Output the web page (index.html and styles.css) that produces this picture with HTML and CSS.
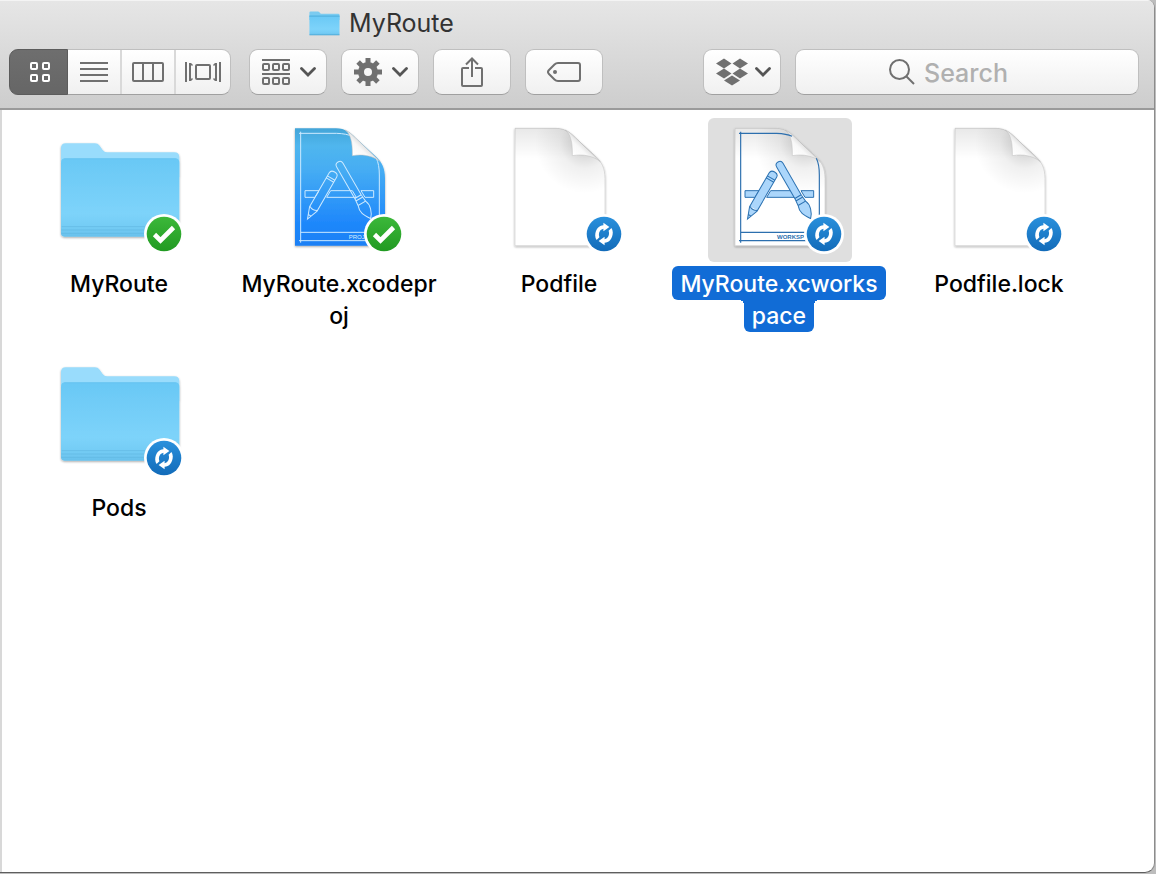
FILE: index.html
```html
<!DOCTYPE html>
<html lang="en">
<head>
<meta charset="utf-8">
<title>MyRoute</title>
<link rel="stylesheet" href="styles.css">
</head>
<body>
<svg class="defs" aria-hidden="true">
  <defs>
    <linearGradient id="g-front" x1="0" y1="0" x2="0" y2="1"><stop offset="0" stop-color="#69c8f5"/><stop offset=".7" stop-color="#7dd3fa"/><stop offset=".88" stop-color="#74ccf5"/><stop offset="1" stop-color="#69c1ec"/></linearGradient>
    <linearGradient id="g-blue" x1="0" y1="0" x2="0" y2="1"><stop offset="0" stop-color="#43a5d8"/><stop offset=".15" stop-color="#50b6ee"/><stop offset=".35" stop-color="#46adf3"/><stop offset=".8" stop-color="#1f88fb"/><stop offset="1" stop-color="#1c80f5"/></linearGradient>
    <radialGradient id="g-shade" gradientUnits="userSpaceOnUse" cx="405" cy="85" r="150"><stop offset="0" stop-color="#000" stop-opacity=".2"/><stop offset=".25" stop-color="#000" stop-opacity=".14"/><stop offset=".5" stop-color="#000" stop-opacity=".06"/><stop offset="1" stop-color="#000" stop-opacity="0"/></radialGradient>
    <linearGradient id="g-top" gradientUnits="userSpaceOnUse" x1="0" y1="40" x2="0" y2="130"><stop offset="0" stop-color="#000" stop-opacity=".09"/><stop offset="1" stop-color="#000" stop-opacity="0"/></linearGradient>
    <linearGradient id="g-flap" gradientUnits="userSpaceOnUse" x1="370" y1="122" x2="404" y2="86"><stop offset="0" stop-color="#fff"/><stop offset=".6" stop-color="#f8f8f8"/><stop offset="1" stop-color="#dadada"/></linearGradient>
    <linearGradient id="g-green" x1="0" y1="0" x2="0" y2="1"><stop offset="0" stop-color="#3cb83a"/><stop offset="1" stop-color="#219a22"/></linearGradient>
    <linearGradient id="g-sync" x1="0" y1="0" x2="0" y2="1"><stop offset="0" stop-color="#2990dc"/><stop offset="1" stop-color="#126bb9"/></linearGradient>
    <filter id="shadow" x="-10%" y="-10%" width="120%" height="120%"><feDropShadow dx="0" dy="3" stdDeviation="3" flood-color="#000" flood-opacity=".35"/></filter>
  </defs>

  <symbol id="folder" viewBox="24 -6 432 432">
    <g filter="url(#shadow)">
      <path d="M63 84q0-14 14-14h88q9 0 14 7l9 13q5 7 13 7h202q15 0 15 14v60H63z" fill="#99dcfc"/>
      <path d="M63 128q0-13 13-13h329q13 0 13 13v212q0 10-10 10H73q-10 0-10-10z" fill="url(#g-front)"/>
    </g>
    <path d="M65 320h351M64 330h353M64 340h353" stroke="#5fb6e0" stroke-width="3" opacity=".65"/>
    <path d="M72 116.500h337" stroke="#61bce8" stroke-width="2" opacity=".6"/>
  </symbol>

  <symbol id="document" viewBox="114 9 432 432">
    <g filter="url(#shadow)"><path d="M195 40H318C346 40 362 54 376 68L437 124C456 142 465 160 465 190V392H195Z" fill="#fff" stroke="#cfcfcf" stroke-width="2"/></g>
    <path d="M195 40H318C346 40 362 54 376 68L437 124C456 142 465 160 465 190V392H195Z" fill="url(#g-top)"/>
    <path d="M195 40H318C346 40 362 54 376 68L437 124C456 142 465 160 465 190V392H195Z" fill="url(#g-shade)"/>
    <path d="M345 45C361 56 368 80 367 122C400 116 432 124 451 140L376 68C365 57 356 50 345 45Z" fill="url(#g-flap)" stroke="#bdbdbd" stroke-width="1.500"/>
  </symbol>

  <symbol id="tools" viewBox="114 9 432 432">
    <path d="M225 227H267L255 247H225ZM302 227H367L379 247H290ZM393 227H431V247H405Z"/>
    <g transform="translate(314 171) rotate(30)">
      <path d="M-13 11Q-13 0 0 0T13 11V128L0 163L-13 128ZM-13 21H13M-13 28H13M-13 126Q0 134 13 126M-5 150H5"/>
    </g>
    <g transform="translate(324 141) rotate(-30)">
      <path d="M-11 11Q-11 0 0 0T11 11V120H-11ZM-11 120H11L13 143H-13ZM-12 128H12M-13 143C-21 164-13 176 0 196C13 182 21 160 13 143Z"/>
    </g>
  </symbol>

  <symbol id="frame" viewBox="114 9 432 432">
    <path d="M212 50V383M207 55H320Q350 56 366 64M439 130Q448 148 448 180V383M207 377H455M212 352H448"/>
  </symbol>

  <symbol id="project" viewBox="114 9 432 432">
    <g filter="url(#shadow)"><path d="M195 40H318C346 40 362 54 376 68L437 124C456 142 465 160 465 190V392H195Z" fill="url(#g-blue)"/></g>
    <g fill="none" stroke="#cdeaff" stroke-width="3">
      <use href="#frame" x="114" y="9" width="432" height="432"/>
      <use href="#tools" x="114" y="9" width="432" height="432"/>
    </g>
    <path d="M345 45C361 56 368 80 367 122C400 116 432 124 451 140L376 68C365 57 356 50 345 45Z" fill="url(#g-flap)" stroke="#bdbdbd" stroke-width="1.500"/>
  </symbol>

  <symbol id="workspace" viewBox="114 9 432 432">
    <use href="#document" x="114" y="9" width="432" height="432"/>
    <use href="#frame" x="114" y="9" width="432" height="432" fill="none" stroke="#2c6fae" stroke-width="3.500"/>
    <use href="#tools" x="114" y="9" width="432" height="432" fill="#abd6fb" stroke="#2c72b2" stroke-width="3"/>
  </symbol>

  <symbol id="badge-check" viewBox="0 0 40 40">
    <circle cx="20" cy="20" r="20" fill="#fff"/><circle cx="20" cy="20" r="17.300" fill="url(#g-green)"/>
    <path d="M10.500 20.500l6 6L29.500 13.500" fill="none" stroke="#fff" stroke-width="4.600"/>
  </symbol>
  <symbol id="badge-sync" viewBox="-20 -20 40 40">
    <circle r="20" fill="#fff"/><circle r="17.300" fill="url(#g-sync)"/>
    <g id="sync-arrow"><path d="M-8.800 1.500C-8.600-5-5-8.600-.6-8.800V-11.300L5.400-7L-.6-2.700V-5.200C-4-4.500-6-1-4.600 3.200L-7.400 6Q-8.800 4-8.800 1.500Z" fill="#fff"/></g>
    <use href="#sync-arrow" transform="rotate(180)"/>
  </symbol>
  <symbol id="chevron" viewBox="0 0 16 10"><path d="M1.500 1.500L8 8L14.500 1.500" fill="none" stroke="#555" stroke-width="2.800" stroke-linecap="round"/></symbol>
</svg>

<div class="window">
  <header class="chrome">
    <h1 class="title">
      <svg class="title-icon" viewBox="58 66 366 294" aria-hidden="true">
        <path d="M63 84q0-14 14-14h88q9 0 14 7l9 13q5 7 13 7h202q15 0 15 14v60H63z" fill="#7bcbf0"/>
        <path d="M63 128q0-13 13-13h329q13 0 13 13v212q0 10-10 10H73q-10 0-10-10z" fill="url(#g-front)"/>
        <path d="M63 126h355M63 347h355" stroke="#4da9d6" stroke-width="10"/>
      </svg>
      MyRoute
    </h1>
    <div class="toolbar" role="toolbar" aria-label="Finder toolbar">
      <div class="views">
        <button class="view view-active" type="button" aria-label="Icon view" aria-pressed="true">
          <svg width="22" height="22" viewBox="0 0 22 22" fill="none" stroke="#fff" stroke-width="2"><rect x="2" y="2" width="6" height="6" rx="1"/><rect x="14" y="2" width="6" height="6" rx="1"/><rect x="2" y="14" width="6" height="6" rx="1"/><rect x="14" y="14" width="6" height="6" rx="1"/></svg>
        </button>
        <button class="view" type="button" aria-label="List view">
          <svg width="28" height="20" viewBox="0 0 28 20" stroke="#707070" stroke-width="2"><path d="M0 1h28M0 7h28M0 13h28M0 19h28"/></svg>
        </button>
        <button class="view" type="button" aria-label="Column view">
          <svg width="32" height="20" viewBox="0 0 32 20" fill="none" stroke="#707070" stroke-width="2"><rect x="1" y="1" width="30" height="18" rx="1"/><path d="M11 1v18M21 1v18"/></svg>
        </button>
        <button class="view" type="button" aria-label="Cover Flow view">
          <svg width="36" height="20" viewBox="0 0 36 20" fill="none" stroke="#707070" stroke-width="2"><path d="M1 0v20M35 0v20M5 1v18M31 1v18"/><path d="M5.500 1.500l2 2M5.500 18.500l2-2M30.500 1.500l-2 2M30.500 18.500l-2-2" stroke-width="1.500"/><rect x="11" y="3" width="14" height="14" rx="1"/></svg>
        </button>
      </div>
      <button class="tool tool-menu" type="button" aria-label="Arrange">
        <svg width="28" height="26" viewBox="0 0 28 26" fill="none" stroke="#707070" stroke-width="2"><path d="M0 1h28M0 15h28"/><rect x="1" y="5" width="6" height="6" rx="1"/><rect x="11" y="5" width="6" height="6" rx="1"/><rect x="21" y="5" width="6" height="6" rx="1"/><rect x="1" y="19" width="6" height="6" rx="1"/><rect x="11" y="19" width="6" height="6" rx="1"/><rect x="21" y="19" width="6" height="6" rx="1"/></svg>
        <svg class="chevron"><use href="#chevron"/></svg>
      </button>
      <button class="tool tool-menu" type="button" aria-label="Action">
        <svg width="28" height="28" viewBox="-14 -14 28 28" fill="none" stroke="#707070"><circle r="7" stroke-width="6"/><path stroke-width="5" d="M0-14v6M0 8v6M-14 0h6M8 0h6M-9.900-9.900l4 4M5.900 5.900l4 4M-9.900 9.900l4-4M5.900-5.900l4-4"/></svg>
        <svg class="chevron"><use href="#chevron"/></svg>
      </button>
      <button class="tool" type="button" aria-label="Share">
        <svg width="22" height="30" viewBox="0 0 22 30" fill="none" stroke="#707070" stroke-width="2"><path d="M8 11H2q-1 0-1 1v16q0 1 1 1h18q1 0 1-1V12q0-1-1-1h-6M11 20V2M5 7.500L11 1.500L17 7.500"/></svg>
      </button>
      <button class="tool" type="button" aria-label="Edit tags">
        <svg width="34" height="20" viewBox="0 0 34 20" fill="none" stroke="#707070" stroke-width="2"><path d="M11 1H31q2 0 2 2V17q0 2-2 2H11Q9 19 7.500 17.500L2 12Q0 10 2 8L7.500 2.500Q9 1 11 1Z"/><circle cx="8" cy="10" r="2" fill="#707070" stroke="none"/></svg>
      </button>
      <button class="tool tool-menu tool-dropbox" type="button" aria-label="Dropbox">
        <svg width="32" height="28" viewBox="0 0 32 28" fill="#707070"><path d="M8 .5L15.500 5.500L8 10.500L0 5.500ZM24 .5L32 5.500L24 10.500L16.500 5.500ZM8 10.500L15.500 15.500L8 20.500L0 15.500ZM24 10.500L32 15.500L24 20.500L16.500 15.500ZM16 17.500L24 22.500L16 27.500L8 22.500Z"/></svg>
        <svg class="chevron"><use href="#chevron"/></svg>
      </button>
      <label class="search">
        <svg width="26" height="26" viewBox="0 0 26 26" fill="none" stroke="#707070" stroke-width="2" aria-hidden="true"><circle cx="10.500" cy="10.500" r="9.500"/><path d="M17 17l8 8"/></svg>
        <input class="search-input" type="search" placeholder="Search" aria-label="Search">
      </label>
    </div>
  </header>

  <main class="content">
    <ul class="files">
      <li><button class="file" type="button">
        <span class="icon"><svg class="art"><use href="#folder"/></svg><svg class="badge"><use href="#badge-check"/></svg></span>
        <span class="name"><span class="line">MyRoute</span></span>
      </button></li>
      <li><button class="file" type="button">
        <span class="icon"><svg class="art" viewBox="114 9 432 432"><use href="#project" x="114" y="9" width="432" height="432"/><text x="356" y="371" class="stamp stamp-light">PROJ</text></svg><svg class="badge"><use href="#badge-check"/></svg></span>
        <span class="name"><span class="line">MyRoute.xcodepr</span><span class="line">oj</span></span>
      </button></li>
      <li><button class="file" type="button">
        <span class="icon"><svg class="art"><use href="#document"/></svg><svg class="badge"><use href="#badge-sync"/></svg></span>
        <span class="name"><span class="line">Podfile</span></span>
      </button></li>
      <li><button class="file file-selected" type="button" aria-pressed="true">
        <span class="icon"><svg class="art" viewBox="114 9 432 432"><use href="#workspace" x="114" y="9" width="432" height="432"/><text x="321" y="371" class="stamp stamp-dark">WORKSP</text></svg><svg class="badge"><use href="#badge-sync"/></svg></span>
        <span class="name"><span class="line">MyRoute.xcworks</span><span class="line">pace</span></span>
      </button></li>
      <li><button class="file" type="button">
        <span class="icon"><svg class="art"><use href="#document"/></svg><svg class="badge"><use href="#badge-sync"/></svg></span>
        <span class="name"><span class="line">Podfile.lock</span></span>
      </button></li>
      <li><button class="file" type="button">
        <span class="icon"><svg class="art"><use href="#folder"/></svg><svg class="badge"><use href="#badge-sync"/></svg></span>
        <span class="name"><span class="line">Pods</span></span>
      </button></li>
    </ul>
  </main>
</div>
</body>
</html>
```

FILE: styles.css
```css
* { box-sizing: border-box; }

body {
  margin: 0;
  padding: 0 1px 1px 0;
  min-height: 100vh;
  display: flex;
  background: #bdbdbd;
  font-family: Inter, "Liberation Sans", sans-serif;
  color: #000;
}

button {
  font: inherit;
  color: inherit;
  padding: 0;
  border: 0;
  background: none;
}

svg { display: block; flex: none; }

.defs { position: absolute; width: 0; height: 0; }

.window {
  flex: 1;
  display: flex;
  flex-direction: column;
  background: #fff;
  border-right: 1px solid #8c8c8c;
  border-bottom: 1px solid #5e5e5e;
  border-radius: 0 8px 10px 0;
  overflow: hidden;
}

.chrome {
  padding-bottom: 13px;
  background: linear-gradient(#e6e6e6, #cdcdcd);
  border-top: 1px solid #f4f4f4;
  border-bottom: 2px solid #9a9a9a;
}

.title {
  display: flex;
  align-items: center;
  gap: 9px;
  height: 48px;
  margin: 0;
  padding: 0 0 4px 309px;
  font-size: 25px;
  line-height: 32px;
  font-weight: 400;
  color: #333;
}

.title-icon { width: 31px; height: 25px; }

.toolbar {
  display: flex;
  gap: 14px;
  padding: 0 15px 0 9px;
}

.views {
  display: flex;
  margin-right: 4px;
  border-radius: 9px;
}

.views, .tool, .search {
  height: 46px;
  border: 1px solid #bfbfbf;
  border-bottom-color: #a0a0a0;
  background: linear-gradient(#fff, #f0f0f0);
}

.view {
  display: flex;
  align-items: center;
  justify-content: center;
  width: 54px;
  border-right: 2px solid #d9d9d9;
}

.view:last-child { border-right: 0; }

.view-active {
  width: 59px;
  margin: -1px 0 -1px -1px;
  padding-left: 3px;
  border: 1px solid #5c5c5c;
  border-radius: 9px 0 0 9px;
  background: linear-gradient(#6e6e6e, #666);
}

.tool {
  display: flex;
  align-items: center;
  justify-content: center;
  width: 78px;
  border-radius: 9px;
}

.tool-menu { gap: 10px; padding-left: 2px; }

.tool-dropbox { margin-left: auto; gap: 7px; }

.chevron { width: 16px; height: 10px; }

.search {
  display: flex;
  align-items: center;
  gap: 9px;
  flex: 0 1 344px;
  min-width: 0;
  padding-left: 93px;
  border-radius: 9px;
}

.search-input {
  flex: 1;
  min-width: 0;
  padding: 2px 0 0;
  border: 0;
  outline: 0;
  background: none;
  font: 500 25px/32px Inter, "Liberation Sans", sans-serif;
  color: #333;
}

.search-input::placeholder { color: #b0b0b0; opacity: 1; }

.content {
  flex: 1;
  padding: 8px;
  border-left: 2px solid #d8d8d8;
}

.files {
  display: grid;
  grid-template-columns: repeat(auto-fill, 220px);
  grid-auto-rows: minmax(214px, auto);
  row-gap: 10px;
  margin: 0;
  padding: 0;
  list-style: none;
}

.file {
  display: flex;
  flex-direction: column;
  align-items: center;
  gap: 4px;
  width: 100%;
}

.icon {
  position: relative;
  width: 144px;
  height: 144px;
  border-radius: 6px;
}

.art { width: 144px; height: 144px; }

.badge {
  position: absolute;
  right: 8px;
  bottom: 8px;
  width: 40px;
  height: 40px;
}

.name {
  display: flex;
  flex-direction: column;
  align-items: center;
  padding-right: 2px;
  font-size: 23px;
  font-weight: 500;
  line-height: 32px;
}

.line { padding: 0 8px; }

.line:first-child { padding-top: 2px; }

.file-selected .icon { background: #dfdfdf; }

.file-selected .line {
  background: #116cd6;
  border-radius: 6px;
  color: #fff;
}

.file-selected .line + .line {
  position: relative;
  border-radius: 0 0 6px 6px;
}

/* concave corners where the second line meets the first */
.file-selected .line + .line::before,
.file-selected .line + .line::after {
  content: "";
  position: absolute;
  top: 0;
  width: 5px;
  height: 5px;
}

.file-selected .line + .line::before {
  right: 100%;
  background: radial-gradient(circle at 0 100%, transparent 5px, #116cd6 5px);
}

.file-selected .line + .line::after {
  left: 100%;
  background: radial-gradient(circle at 100% 100%, transparent 5px, #116cd6 5px);
}

.stamp { font: 400 18px "Liberation Sans", sans-serif; }
.stamp-light { fill: #d9efff; }
.stamp-dark { fill: #2c6fae; font-weight: 700; }
```
